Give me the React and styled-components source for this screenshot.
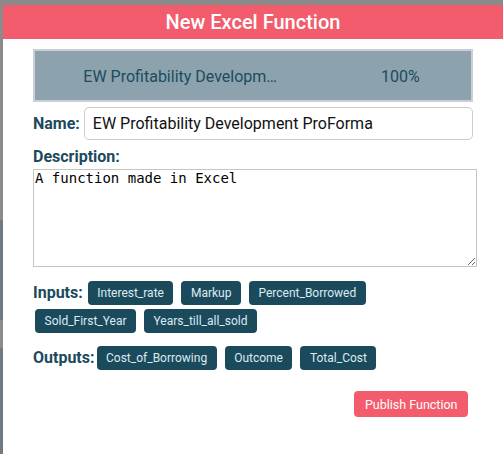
import React from 'react';
import styled, { createGlobalStyle } from 'styled-components';

const GlobalStyle = createGlobalStyle`
  html, body {
    margin: 0;
    padding: 0;
    height: 100%;
    overflow: hidden;
  }
  body {
    background: linear-gradient(
      to bottom,
      #8a8a8a 0,
      #8a8a8a 220px,
      #6f7b82 220px,
      #6f7b82 320px,
      #8c8c8c 320px,
      #8c8c8c 348px,
      #6f7b82 348px
    );
    font-family: Roboto, 'Liberation Sans', sans-serif;
  }
`;

const inputs = ['Interest_rate', 'Markup', 'Percent_Borrowed', 'Sold_First_Year', 'Years_till_all_sold'];
const outputs = ['Cost_of_Borrowing', 'Outcome', 'Total_Cost'];

export default function App() {
  return (
    <>
      <GlobalStyle />
      <Backdrop>
        <Modal>
          <Header>New Excel Function</Header>
          <Body>
            <ProgressBar>
              <BarName>EW Profitability Development ProForma</BarName>
              <BarPercent>100%</BarPercent>
            </ProgressBar>

            <NameRow>
              <Label>Name:</Label>
              <NameInput defaultValue="EW Profitability Development ProForma" />
            </NameRow>

            <Label $block>Description:</Label>
            <Description defaultValue="A function made in Excel" />

            <ChipRow>
              <Label>Inputs:</Label>
              {inputs.map((name) => (
                <Chip key={name}>{name}</Chip>
              ))}
            </ChipRow>

            <ChipRow $outputs>
              <Label>Outputs:</Label>
              {outputs.map((name) => (
                <Chip key={name}>{name}</Chip>
              ))}
            </ChipRow>

            <Footer>
              <PublishButton>Publish Function</PublishButton>
            </Footer>
          </Body>
        </Modal>
      </Backdrop>
    </>
  );
}

const Backdrop = styled.div`
  height: 454px;
  padding: 5px 0 0 3px;
  box-sizing: border-box;
`;

const Modal = styled.div`
  width: 510px;
  height: 100%;
  background: #ffffff;
`;

const Header = styled.div`
  height: 34px;
  background: #f25c6c;
  color: #ffffff;
  font-size: 20px;
  font-weight: 500;
  line-height: 34px;
  width: 500px;
  text-align: center;
`;

const Body = styled.div`
  padding: 10px 0 0 30px;
  width: 444px;
`;

const ProgressBar = styled.div`
  display: grid;
  grid-template-columns: 2fr 1fr;
  align-items: center;
  height: 53px;
  width: 440px;
  box-sizing: border-box;
  background: #8ca3ad;
  border: 2px solid #c9ced8;
  color: #1d4b5f;
  font-size: 16px;
  padding-top: 2px;
`;

const BarName = styled.span`
  justify-self: center;
  max-width: 194px;
  white-space: nowrap;
  overflow: hidden;
  text-overflow: ellipsis;
`;

const BarPercent = styled.span`
  justify-self: center;
  padding-left: 4px;
`;

const NameRow = styled.div`
  display: flex;
  align-items: center;
  gap: 4px;
  margin-top: 5px;
  width: 440px;
`;

const Label = styled.span`
  display: ${(p) => (p.$block ? 'block' : 'inline-block')};
  color: #1b4a5e;
  font-size: 16px;
  font-weight: 700;
  margin-top: ${(p) => (p.$block ? '7px' : '0')};
  line-height: 19px;
`;

const NameInput = styled.input`
  flex: 1;
  height: 33px;
  box-sizing: border-box;
  border: 1px solid #cccccc;
  border-radius: 5px;
  padding: 0 8px;
  font-family: Roboto, 'Liberation Sans', sans-serif;
  font-size: 16px;
  color: #111111;
  outline: none;
`;

const Description = styled.textarea`
  display: block;
  width: 444px;
  height: 98px;
  box-sizing: border-box;
  margin: 3px 0 0;
  border: 1px solid #c8c4c0;
  padding: 0 1px;
  font-family: 'DejaVu Sans Mono', monospace;
  font-size: 14px;
  color: #000000;
  outline: none;
`;

const ChipRow = styled.div`
  display: flex;
  flex-wrap: wrap;
  align-items: flex-start;
  gap: 4px 6px;
  margin-top: ${(p) => (p.$outputs ? '13px' : '14px')};
  width: 440px;

  & > span:first-child {
    margin-top: 2px;
    margin-right: ${(p) => (p.$outputs ? '-6px' : '-3px')};
  }
`;

const Chip = styled.div`
  height: 24px;
  line-height: 24px;
  padding: 0 9.5px;
  margin-left: 2px;
  border-radius: 4px;
  background: #1b4a5c;
  color: #dcebf0;
  font-size: 12px;
`;

const Footer = styled.div`
  display: flex;
  justify-content: flex-end;
  margin-top: 21px;
  width: 435px;
`;

const PublishButton = styled.button`
  height: 26px;
  padding: 0 10.5px;
  border: none;
  border-radius: 4px;
  background: #f25c6c;
  color: #ffffff;
  font-family: Roboto, 'Liberation Sans', sans-serif;
  font-size: 12.5px;
  cursor: pointer;
`;
